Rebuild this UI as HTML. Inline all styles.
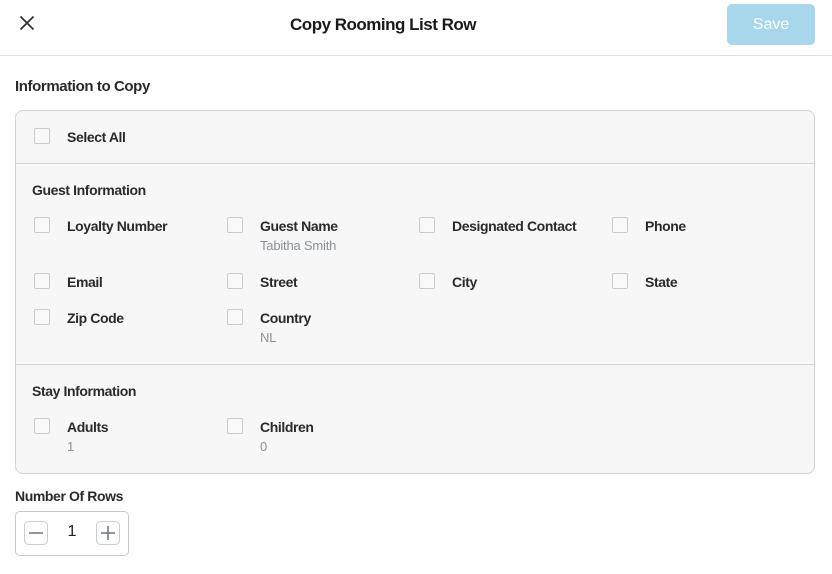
<!DOCTYPE html>
<html><head><style>
*{box-sizing:border-box;margin:0;padding:0}
body{width:832px;height:574px;background:#fff;font-family:"Liberation Sans",sans-serif;color:#222;position:relative;overflow:hidden}
.a{position:absolute}
.t{font-size:14px;font-weight:bold;letter-spacing:-0.4px;color:#2a2a2a;white-space:nowrap}
.s{font-size:13px;color:#8a9297;letter-spacing:-0.2px;white-space:nowrap}
.cb{position:absolute;width:16px;height:16px;border:1px solid #c9ccce;border-radius:2px;background:#f9f9f9}
.hr{position:absolute;left:16px;width:798px;height:1px;background:#d3d6d8}
</style></head><body>
<svg class="a" style="left:19px;top:15px" width="16" height="16" viewBox="0 0 16 16"><path d="M1.5 1.5L14.5 14.5M14.5 1.5L1.5 14.5" stroke="#333" stroke-width="1.8"/></svg>
<div class="a" style="left:0;width:766px;top:15px;text-align:center;font-size:17px;font-weight:bold;letter-spacing:-0.5px;color:#1a1a1a">Copy Rooming List Row</div>
<div class="a" style="left:727px;top:4px;width:88px;height:41px;border-radius:5px;background:#a8d6eb;color:#fff;font-size:16px;text-align:center;line-height:41px">Save</div>
<div class="a" style="left:0;top:55px;width:832px;height:1px;background:#e2e2e2"></div>
<div class="a t" style="left:15px;top:78px;font-size:15px">Information to Copy</div>
<div class="a" style="left:15px;top:110px;width:800px;height:364px;background:#f7f7f7;border:1px solid #cfd3d5;border-radius:8px"></div>
<div class="cb" style="left:34px;top:128px"></div><div class="a t" style="left:67px;top:129px">Select All</div>
<div class="hr" style="top:163px"></div>
<div class="a t" style="left:32px;top:182px">Guest Information</div>

<div class="cb" style="left:34px;top:217px"></div><div class="a t" style="left:67px;top:218px">Loyalty Number</div>
<div class="cb" style="left:227px;top:217px"></div><div class="a t" style="left:260px;top:218px">Guest Name</div><div class="a s" style="left:260px;top:238px">Tabitha Smith</div>
<div class="cb" style="left:419px;top:217px"></div><div class="a t" style="left:452px;top:218px">Designated Contact</div>
<div class="cb" style="left:612px;top:217px"></div><div class="a t" style="left:645px;top:218px">Phone</div>

<div class="cb" style="left:34px;top:273px"></div><div class="a t" style="left:67px;top:274px">Email</div>
<div class="cb" style="left:227px;top:273px"></div><div class="a t" style="left:260px;top:274px">Street</div>
<div class="cb" style="left:419px;top:273px"></div><div class="a t" style="left:452px;top:274px">City</div>
<div class="cb" style="left:612px;top:273px"></div><div class="a t" style="left:645px;top:274px">State</div>

<div class="cb" style="left:34px;top:309px"></div><div class="a t" style="left:67px;top:310px">Zip Code</div>
<div class="cb" style="left:227px;top:309px"></div><div class="a t" style="left:260px;top:310px">Country</div><div class="a s" style="left:260px;top:330px">NL</div>

<div class="hr" style="top:364px"></div>
<div class="a t" style="left:32px;top:383px">Stay Information</div>
<div class="cb" style="left:34px;top:418px"></div><div class="a t" style="left:67px;top:419px">Adults</div><div class="a s" style="left:67px;top:439px">1</div>
<div class="cb" style="left:227px;top:418px"></div><div class="a t" style="left:260px;top:419px">Children</div><div class="a s" style="left:260px;top:439px">0</div>

<div class="a t" style="left:15px;top:488px;font-size:14px">Number Of Rows</div>
<div class="a" style="left:15px;top:511px;width:114px;height:45px;border:1px solid #c4c9cc;border-radius:5px"></div>
<svg class="a" style="left:24px;top:521px" width="24" height="24" viewBox="0 0 24 24"><rect x="0.5" y="0.5" width="23" height="23" rx="4" fill="#fff" stroke="#c9ced1"/><path d="M5 12H19" stroke="#6c757b" stroke-width="1.5"/></svg>
<div class="a" style="left:60px;top:523px;width:24px;text-align:center;font-size:16px;color:#222">1</div>
<svg class="a" style="left:96px;top:521px" width="24" height="24" viewBox="0 0 24 24"><rect x="0.5" y="0.5" width="23" height="23" rx="4" fill="#fff" stroke="#c9ced1"/><path d="M5 12H19M12 5V19" stroke="#6c757b" stroke-width="1.5"/></svg>
</body></html>
